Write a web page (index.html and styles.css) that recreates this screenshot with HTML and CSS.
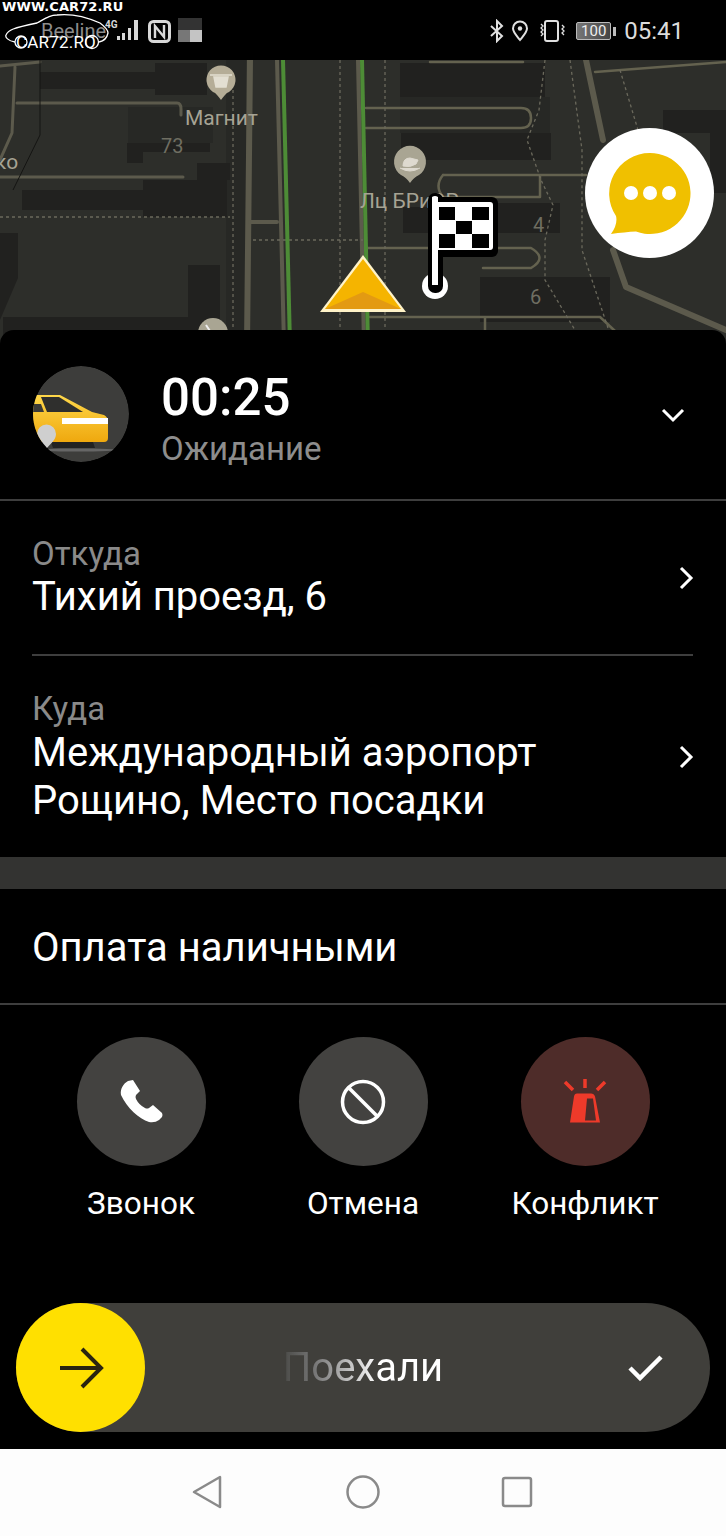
FILE: index.html
```html
<!DOCTYPE html>
<html lang="ru">
<head>
<meta charset="utf-8">
<title>Ожидание</title>
<link rel="stylesheet" href="styles.css">
</head>
<body>
<div class="screen">
  <header class="status">
    <div class="status-left">
      <span class="carrier">Beeline</span>
      <svg class="signal" width="33" height="22" viewBox="0 0 33 22"><text x="0" y="10" class="sig-text">4G</text><path d="M12 18h3v4h-3zM17 15h3v7h-3zM23 10h3v12h-3zM29 2h4v20h-4z" fill="#d8d8d8"/></svg>
      <svg class="nfc" width="23" height="23" viewBox="0 0 23 23"><rect x="1.500" y="1.500" width="20" height="20" rx="4" fill="none" stroke="#d8d8d8" stroke-width="3"/><path d="M7 18V6l9 11V5" fill="none" stroke="#d8d8d8" stroke-width="2.400"/></svg>
      <svg class="thumb" width="24" height="24" viewBox="0 0 24 24"><rect width="24" height="12" fill="#333"/><rect y="12" width="12" height="12" fill="#777"/><rect x="12" y="12" width="12" height="12" fill="#c4c4c4"/></svg>
    </div>
    <div class="status-right">
      <svg width="16" height="24" viewBox="0 0 16 24"><path d="M2 7l11 10-5 5V2l5 5L2 17" fill="none" stroke="#e0e0e0" stroke-width="2"/></svg>
      <svg class="st-loc" width="18" height="22" viewBox="0 0 18 22"><path d="M9 20C5 15 2 12 2 8.500a7 7 0 0 1 14 0C16 12 13 15 9 20z" fill="none" stroke="#e0e0e0" stroke-width="2"/><circle cx="9" cy="8.500" r="2.200" fill="#e0e0e0"/></svg>
      <svg class="st-vib" width="27" height="22" viewBox="0 0 27 22"><rect x="7" y="1" width="13" height="20" rx="2" fill="none" stroke="#e0e0e0" stroke-width="2"/><path d="M3 4l2 2-2 2 2 2-2 2 2 2-2 2M24 5l2 2-2 2 2 2-2 2 2 2" fill="none" stroke="#e0e0e0" stroke-width="1.300"/></svg>
      <span class="battery"><span class="battery-level">100</span></span>
      <span class="clock">05:41</span>
    </div>
    <div class="watermark">
      <span class="wm-url">WWW.CAR72.RU</span>
      <svg class="wm-car" width="108" height="38" viewBox="0 0 108 38"><path d="M11 29C4 28 1 24 2 22 4 17 9 15 33 10 42 5 46 2 53 2 62 1 78 2 96 10 100 13 104 17 104 20 103 25 100 28 95 29" fill="none" stroke="#fff" stroke-width="1.300"/><circle cx="17" cy="29" r="6" fill="none" stroke="#fff" stroke-width="1.300"/><circle cx="88" cy="29" r="6.500" fill="none" stroke="#fff" stroke-width="1.300"/></svg>
      <span class="wm-ro">CAR72.RO</span>
    </div>
  </header>

  <div class="map">
    <svg class="map-art" width="726" height="285" viewBox="0 60 726 285">
      <rect x="0" y="60" width="726" height="285" fill="#2d2e2a"/>
      <g fill="#272825">
        <path d="M128 107h85v36h-85zM400 97h150v36H400zM436 200h50v33h-50zM226 60h20v270h-20z"/>
      </g>
      <g fill="#21211f">
        <path d="M40 72h115v17H40zM155 63h52v32h-52z"/>
        <path d="M127 143h16v20h-16zM143 143h67v9h-67zM22 190h121v20H22zM143 180h84v37h-84zM197 163h33v17h-33z"/>
        <path d="M188 265h32v65h-32zM0 233h18v45L0 320zM3 317h185v20H3z"/>
        <path d="M400 63h145v34H400zM401 133h150v27H401zM403 207h30v26h-30zM484 203h76v30h-76zM480 277h130v45H480z"/>
        <path d="M663 110h63v23h-63zM710 133h16v60h-16z"/>
      </g>
      <g fill="none" stroke="#5c5a4c" stroke-linecap="round" stroke-linejoin="round">
        <path d="M250 60l-3 285" stroke-width="6"/>
        <path d="M277 60l7 285M250 222h27M358 60l6 285" stroke-width="4"/>
        <path d="M0 66l40-4M15 67l-3 66L0 160M17 103h160q4 0 4 6v6M0 177h183" stroke-width="3"/>
        <path d="M586 60l17 80M613 250l13 37 100 43" stroke-width="6"/>
        <path d="M366 108h155q10 0 10 10t-10 10H366M443 175h143M540 175v22M443 197q-9-11 0-22M443 197h97M366 248h165q17 10 0 20h-48M370 317h230M485 317v28M430 62h93M595 72l131-10M600 317l30 28" stroke-width="2.500" stroke="#64624f"/>
      </g>
      <g fill="none" stroke="#6b695c" stroke-width="1.300" stroke-dasharray="3 3">
        <path d="M233 90v240M0 217h230M253 240h110M340 60v285M385 60v285M545 60l-6 50-12 30 14 40 12 25-8 35v40l30 50M570 60l12 90 0 100 30 90M620 70l30 100"/>
      </g>
      <path d="M40 60v75L13 190" fill="none" stroke="#141412" stroke-width="1"/>
      <path d="M283 60l7 285" fill="none" stroke="#4d8c36" stroke-width="4"/>
      <path d="M362 60l6 285" fill="none" stroke="#4d8c36" stroke-width="4"/>
      <text class="map-label" x="185" y="125">Магнит</text>
      <text class="map-num" x="161" y="153">73</text>
      <text class="map-label" x="-5" y="169">ко</text>
      <text class="map-label" x="360" y="208">Лц БРиОР</text>
      <text class="map-num" x="533" y="232">4</text>
      <text class="map-num" x="530" y="304">6</text>
      <path d="M221 100c-3-4-5-7-8-8a14.500 14.500 0 1 1 16 0c-3 1-5 4-8 8z" fill="#b5ad97"/>
      <path d="M214 77h14l-2 10h-10zM210 75h22" fill="#e3dfd2" stroke="#e3dfd2" stroke-width="1.500"/>
      <path d="M410 183c-3-4-5-6-9-8a16 16 0 1 1 18 0c-4 2-6 4-9 8z" fill="#a9a593"/>
      <path d="M400 168q10 6 20 0M403 166q0-8 7-8l8 2-2 4q-6 4-13 2z" fill="#dedad0" stroke="#dedad0"/>
      <circle cx="213" cy="333" r="15" fill="#a9a593"/>
      <path d="M206 325l4 6h10" fill="none" stroke="#eee" stroke-width="2"/>
      <path d="M363 255l-43 57h86z" fill="#fff3c8"/>
      <path d="M363 259l-38 50h76z" fill="#f5b400"/>
      <path d="M363 292l-38 17h76z" fill="#e39a12"/>
      <circle cx="435" cy="286" r="13" fill="#fff"/>
      <rect x="428" y="193" width="15" height="100" rx="7" fill="#000"/>
      <rect x="428" y="197" width="70" height="60" rx="6" fill="#000"/>
      <path d="M432 197q3-2 6 0v88h-6zM438 202h52q3 0 3 3v42q0 3-3 3h-52z" fill="#fff"/>
      <path d="M439 207h16v13h-16zM472 207h17v13h-17zM456 221h16v13h-16zM439 234h16v14h-16zM472 234h17v14h-17z" fill="#000"/>
    </svg>
    <button class="chat" type="button" aria-label="Чат">
      <svg width="86" height="86" viewBox="0 0 86 86"><path d="M43 3a40.500 40.500 0 1 1-14 78.500Q18 82 4 84 11 74 9 66A40.500 40.500 0 0 1 43 3z" fill="#f0c000"/><circle cx="24" cy="43" r="7" fill="#fff"/><circle cx="43" cy="43" r="7" fill="#fff"/><circle cx="62" cy="43" r="7" fill="#fff"/></svg>
    </button>
  </div>

  <main class="sheet">
    <section class="order-head">
      <div class="avatar">
        <svg width="96" height="96" viewBox="0 0 96 96">
          <defs><linearGradient id="body" x1="0" y1="0" x2="0" y2="1"><stop offset="0" stop-color="#ffd84a"/><stop offset="1" stop-color="#efa80e"/></linearGradient></defs>
          <circle cx="48" cy="48" r="48" fill="#3d3d3b"/>
          <ellipse cx="44" cy="84" rx="42" ry="1.500" fill="#666"/>
          <path d="M18 76h42l2 6H20z" fill="#222"/>
          <path d="M2 29h25l32 17 12 3q4 2 4 7l0 16q0 4-4 4H0V29z" fill="url(#body)"/>
          <path d="M8 31h18l24 15H14z" fill="#2f2f2d"/>
          <path d="M0 38h8l3 8H0z" fill="#3a3a38"/>
          <path d="M29 52h46v6H29z" fill="#fff"/>
          <path d="M13 83c-5-6-9-9-9-15a9.500 9.500 0 0 1 19 0c0 6-5 9-10 15z" fill="#cfcfcf"/>
        </svg>
      </div>
      <div class="timer">
        <div class="timer-value">00:25</div>
        <div class="timer-label">Ожидание</div>
      </div>
      <svg class="chev-down" width="24" height="16" viewBox="0 0 24 16"><path d="M2 3l10 10L22 3" fill="none" stroke="#fff" stroke-width="3"/></svg>
    </section>

    <section class="route">
      <div class="route-row from">
        <div class="route-text">
          <div class="label">Откуда</div>
          <div class="value">Тихий проезд, 6</div>
        </div>
        <svg class="chev" width="16" height="24" viewBox="0 0 16 24"><path d="M3 2l10 10L3 22" fill="none" stroke="#fff" stroke-width="3"/></svg>
      </div>
      <div class="route-row to">
        <div class="route-text">
          <div class="label">Куда</div>
          <div class="value">Международный аэропорт<br>Рощино, Место посадки</div>
        </div>
        <svg class="chev" width="16" height="24" viewBox="0 0 16 24"><path d="M3 2l10 10L3 22" fill="none" stroke="#fff" stroke-width="3"/></svg>
      </div>
    </section>

    <div class="band"></div>

    <section class="payment">Оплата наличными</section>

    <section class="actions">
      <div class="action">
        <div class="action-circle">
          <svg width="44" height="44" viewBox="0 0 44 44"><path d="M9 1l5-1 7 11-4 4q-1 2 0 4 3 6 9 9 2 1 4 0l4-3 9 8q1 2 0 4l-3 3q-4 3-10 2C20 39 8 28 2 15 1 9 4 4 9 1z" fill="#fff"/></svg>
        </div>
        <span class="action-label">Звонок</span>
      </div>
      <div class="action">
        <div class="action-circle">
          <svg width="46" height="46" viewBox="0 0 46 46"><circle cx="23" cy="23" r="20.500" fill="none" stroke="#fff" stroke-width="3.500"/><path d="M9 9l28 28" stroke="#fff" stroke-width="3.500"/></svg>
        </div>
        <span class="action-label">Отмена</span>
      </div>
      <div class="action">
        <div class="action-circle alert">
          <svg width="44" height="46" viewBox="0 0 44 46"><path d="M22 0v9M2 3l8 8M42 3l-8 8" stroke="#ee3a2a" stroke-width="3.500" fill="none"/><path d="M14 14.500h14q3 0 4 3l5 26H7l4-26q.5-3 3-3zM24 19.500l-2 22h11l-3-22z" fill="#ee3a2a" fill-rule="evenodd"/></svg>
        </div>
        <span class="action-label">Конфликт</span>
      </div>
    </section>

    <section class="slider">
      <div class="knob">
        <svg width="46" height="46" viewBox="0 0 46 46"><path d="M2 23h40M24 4l19 19-19 19" fill="none" stroke="#2a2410" stroke-width="4"/></svg>
      </div>
      <span class="slider-text">Поехали</span>
      <svg class="slider-check" width="36" height="28" viewBox="0 0 36 28"><path d="M2 14l10 10L33 3" fill="none" stroke="#fff" stroke-width="4.500"/></svg>
    </section>
  </main>

  <nav class="navbar">
    <svg class="nav-back" width="30" height="34" viewBox="0 0 30 34"><path d="M28 2v30L2 17z" fill="none" stroke="#8a8a8a" stroke-width="2.500" stroke-linejoin="round"/></svg>
    <svg width="34" height="34" viewBox="0 0 34 34"><circle cx="17" cy="17" r="15.500" fill="none" stroke="#8a8a8a" stroke-width="2.500"/></svg>
    <svg width="32" height="32" viewBox="0 0 32 32"><rect x="2" y="2" width="28" height="28" rx="2" fill="none" stroke="#8a8a8a" stroke-width="2.500"/></svg>
  </nav>
</div>
</body>
</html>
```

FILE: styles.css
```css
* { box-sizing: border-box; }
html, body { margin: 0; padding: 0; background: #000; }
body { font-family: "Roboto", "Noto Sans", "Liberation Sans", sans-serif; color: #fff; }
.screen { width: 726px; height: 1536px; display: flex; flex-direction: column; overflow: hidden; }

.status { position: relative; height: 60px; flex: none; background: #000; display: flex; justify-content: space-between; align-items: center; padding: 2px 42px 0 41px; }
.status-left { display: flex; align-items: center; }
.carrier { font-size: 20px; color: #8d8d8d; width: 64px; }
.sig-text { font-size: 10px; font-weight: 700; fill: #d8d8d8; }
.signal { margin-top: -4px; }
.nfc { margin-left: 10px; }
.thumb { margin-left: 7px; margin-top: -2px; }
.status-right { display: flex; align-items: center; }
.st-loc { margin-left: 6px; }
.st-vib { margin-left: 9px; }
.battery { width: 35px; height: 18px; margin-left: 11px; border: 1px solid #bbb; border-radius: 2px; background: linear-gradient(90deg, #777, #444); display: flex; align-items: center; justify-content: center; position: relative; }
.battery::after { content: ""; position: absolute; right: -6px; top: 4px; width: 3px; height: 9px; background: #bbb; }
.battery-level { font-size: 15px; color: #eee; line-height: 1; }
.clock { font-size: 24px; color: #dcdcdc; margin-left: 13px; }

.watermark { position: absolute; left: 0; top: 0; width: 125px; height: 60px; }
.wm-url { position: absolute; left: 2px; top: -1px; font: 700 13px "DejaVu Sans", sans-serif; color: #fff; white-space: nowrap; letter-spacing: 0.1px; }
.wm-car { position: absolute; left: 4px; top: 13px; }
.wm-ro { position: absolute; left: 16px; top: 32px; font-size: 17px; color: #fff; line-height: 20px; letter-spacing: 0.2px; }

.map { position: relative; height: 285px; flex: none; }
.map-art { display: block; }
.map-label { font-family: "Roboto", sans-serif; font-size: 21px; fill: #a6a394; }
.map-num { font-family: "Roboto", sans-serif; font-size: 20px; fill: #6f6e62; }
.chat { position: absolute; left: 585px; top: 68px; width: 129px; height: 130px; border: 0; border-radius: 50%; background: #fff; padding: 0; display: flex; align-items: center; justify-content: center; }

.sheet { position: relative; flex: 1; margin-top: -15px; background: #000; border-radius: 14px 14px 0 0; display: flex; flex-direction: column; }
.order-head { height: 171px; flex: none; display: flex; align-items: flex-start; padding: 36px 41px 0 33px; border-bottom: 2px solid #3e3e3e; }
.avatar { width: 96px; height: 96px; border-radius: 50%; overflow: hidden; flex: none; }
.avatar svg { display: block; }
.timer { margin-left: 32px; flex: 1; padding-top: 4px; }
.timer-value { font-size: 51px; font-weight: 500; line-height: 56px; }
.timer-label { font-size: 33px; line-height: 40px; color: #8d8d8d; margin-top: 3px; }
.chev-down { margin-top: 41px; }

.route { flex: none; padding: 0 33px 0 32px; }
.route-row { display: flex; align-items: center; justify-content: space-between; }
.route-row .chev { margin-right: -1px; }
.from { height: 155px; border-bottom: 2px solid #3e3e3e; }
.to { height: 201px; padding-top: 1px; }
.to .label { margin-bottom: 1px; }
.label { font-size: 33px; line-height: 38px; color: #8a8a8a; }
.value { font-size: 40px; line-height: 48px; color: #fff; }

.band { height: 32px; flex: none; background: #333331; }
.payment { height: 116px; flex: none; display: flex; align-items: center; padding: 2px 32px 0; font-size: 40px; border-bottom: 2px solid #3e3e3e; }

.actions { flex: none; display: grid; grid-template-columns: repeat(3, 222px); justify-content: center; padding-top: 32px; }
.action { display: flex; flex-direction: column; align-items: center; }
.action-circle { width: 129px; height: 129px; border-radius: 50%; background: #434240; display: flex; align-items: center; justify-content: center; }
.action-circle.alert { background: #4e2c29; }
.action-label { font-size: 31.500px; line-height: 40px; margin-top: 18px; }

.slider { position: relative; margin: 79px 16px 0; height: 129px; flex: none; background: #403f3b; border-radius: 65px; display: flex; align-items: center; justify-content: center; }
.knob { position: absolute; left: 0; top: 0; width: 129px; height: 129px; border-radius: 50%; background: #ffe000; display: flex; align-items: center; justify-content: center; }
.slider-text { font-size: 40px; background: linear-gradient(90deg, #4a4a47 0%, #777 20%, #fff 60%); -webkit-background-clip: text; background-clip: text; color: transparent; }
.slider-check { position: absolute; right: 46px; top: 51px; }

.navbar { height: 87px; flex: none; background: #fdfdfd; display: flex; align-items: center; justify-content: center; gap: 121px; padding: 0 2px 2px 0; }
.nav-back { margin-right: 3px; }
```
